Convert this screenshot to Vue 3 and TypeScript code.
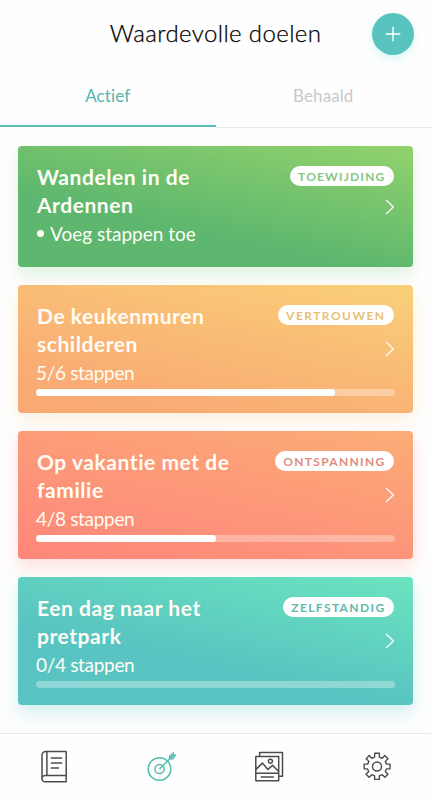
<script setup lang="ts">
interface Goal {
  lines: string[]
  label: string
  theme: string
  done?: number
  total?: number
}

const goals: Goal[] = [
  { lines: ['Wandelen in de', 'Ardennen'], label: 'TOEWIJDING', theme: 'green' },
  { lines: ['De keukenmuren', 'schilderen'], label: 'VERTROUWEN', theme: 'yellow', done: 5, total: 6 },
  { lines: ['Op vakantie met de', 'familie'], label: 'ONTSPANNING', theme: 'coral', done: 4, total: 8 },
  { lines: ['Een dag naar het', 'pretpark'], label: 'ZELFSTANDIG', theme: 'teal', done: 0, total: 4 },
]

const percent = (goal: Goal): string => `${((goal.done ?? 0) / (goal.total ?? 1)) * 100}%`
</script>

<template>
  <div class="app">
    <header class="header">
      <h1>Waardevolle doelen</h1>
      <button class="add" aria-label="Doel toevoegen">
        <svg width="16" height="16" viewBox="0 0 16 16"><path d="M8 .7v14.6M.7 8h14.6" /></svg>
      </button>
    </header>

    <nav class="tabs">
      <a class="tab active">Actief</a>
      <a class="tab">Behaald</a>
    </nav>

    <main class="goals">
      <article v-for="goal in goals" :key="goal.label" class="card" :class="goal.theme">
        <div class="info">
          <h2><span v-for="line in goal.lines" :key="line">{{ line }}</span></h2>
          <p v-if="goal.total" class="steps">{{ goal.done }}/{{ goal.total }} stappen</p>
          <p v-else class="steps empty"><i class="dot"></i>Voeg stappen toe</p>
        </div>
        <span class="badge">{{ goal.label }}</span>
        <svg class="chevron" width="10" height="16" viewBox="0 0 10 16"><path d="M1 .9 8.3 8 1 15.1" /></svg>
        <div v-if="goal.total" class="track">
          <div v-if="goal.done" class="fill" :style="{ width: percent(goal) }"></div>
        </div>
      </article>
    </main>

    <footer class="bar">
      <a class="item">
        <svg width="36" height="36" viewBox="0 0 36 36">
          <path d="M9.7 2.4H30.2V32.8H9.2a3 3 0 0 1-3.2-3.1V6.1a3.7 3.7 0 0 1 3.7-3.7ZM10.9 2.6v23.7M30.2 26.4H9.4A3.2 3.2 0 0 0 6 29.6M14.8 9h11.4M14.8 14h11.4M14.8 19h8.2" />
        </svg>
      </a>
      <a class="item current">
        <svg width="36" height="36" viewBox="1 0 36 36">
          <circle cx="16.5" cy="20" r="11.3" />
          <circle cx="16.5" cy="20" r="4.6" />
          <path d="M16.5 20 31.4 5.3M26.6 9.8V6M26.6 9.8h4M28.4 8V4.4M28.4 8h3.8M30.2 6.2V3.2M30.2 6.2h3" />
        </svg>
      </a>
      <a class="item">
        <svg width="36" height="36" viewBox="0 0 36 36">
          <path d="M8.6 7.6V3.6h22.9v23.7h-3.8M4.8 7.6h22.9v24.1H4.8ZM5 24.2h22.5M9.7 27.9h13.2M5 20.4l6.4-6.3 5.5 6.3 4.6-4 6 5.8" />
          <circle cx="19.4" cy="12.3" r="2" />
        </svg>
      </a>
      <a class="item">
        <svg width="34" height="34" viewBox="0 0 36 36">
          <path d="M15.5 4.5h5v4l3 1.3 2.9-2.8 3.2 3.2-2.8 2.9 1.3 2.9h3.7v5h-3.7l-1.3 2.9 2.8 2.9-3.2 3.2-2.9-2.8-3 1.3v3.7h-5v-3.7l-3-1.3-2.9 2.8-3.2-3.2 2.8-2.9-1.3-2.9H4.4v-5h3.7l1.3-2.9-2.8-2.9 3.2-3.2 2.7 2.8 3-1.3Z" />
          <circle cx="18" cy="18.5" r="4.8" />
        </svg>
      </a>
    </footer>
  </div>
</template>

<style>
body {
  margin: 0;
  background: #fff;
}
</style>

<style scoped>
.app {
  width: 431px;
  height: 800px;
  display: flex;
  flex-direction: column;
  overflow: hidden;
  background: #fefefe;
  font-family: Lato, 'Open Sans', sans-serif;
  font-variant-ligatures: none;
}

h1,
h2,
p {
  margin: 0;
}

svg {
  display: block;
  fill: none;
}

.header {
  height: 68px;
  box-sizing: border-box;
  padding: 0 17px;
  display: grid;
  grid-template-columns: 42px 1fr 42px;
  align-items: center;
}

h1 {
  grid-column: 2;
  padding-bottom: 2px;
  text-align: center;
  font-size: 24px;
  font-weight: 300;
  line-height: 32px;
  letter-spacing: 0.38px;
  -webkit-text-stroke: 0.25px #000;
  white-space: nowrap;
  color: #000;
}

.add {
  width: 42px;
  height: 42px;
  padding: 0;
  border: 0;
  border-radius: 50%;
  display: grid;
  place-items: center;
  background: #59c4bf;
  box-shadow: 0 4px 10px rgba(89, 220, 220, 0.22);
}

.add path {
  stroke: #fff;
  stroke-width: 1.4;
}

.tabs {
  height: 60px;
  display: grid;
  grid-template-columns: 1fr 1fr;
  box-sizing: border-box;
}

.tab {
  box-sizing: border-box;
  height: 60px;
  padding-top: 17px;
  border-bottom: 1px solid #e6e9e9;
  text-align: center;
  font-size: 17px;
  line-height: 21px;
  letter-spacing: 0.1px;
  color: #c9c9c9;
}

.tab.active {
  height: 59px;
  border-bottom: 2px solid #5bbcb7;
  color: #53b5ac;
}

.goals {
  flex: 1;
  padding: 18px 18px 0;
  display: flex;
  flex-direction: column;
  gap: 18px;
}

.card {
  height: 128px;
  box-sizing: border-box;
  padding: 17px 18px;
  border-radius: 4px;
  display: grid;
  grid-template-columns: 1fr auto;
  grid-template-rows: 26px 43px 17px 7px;
  justify-items: end;
  color: #fffdf5;
}

.card.green {
  height: 121px;
}

.info {
  grid-column: 1;
  grid-row: 1 / 4;
  justify-self: start;
  padding-left: 1px;
}

h2 {
  font-size: 21px;
  line-height: 27.5px;
  font-weight: 700;
  letter-spacing: 0.55px;
  white-space: nowrap;
}

h2 span {
  display: block;
}

.steps {
  margin-left: -1px;
  font-size: 19px;
  line-height: 31px;
  letter-spacing: -0.32px;
  white-space: nowrap;
}

.empty {
  margin-left: 0;
  display: flex;
  align-items: center;
  gap: 6px;
  letter-spacing: 0;
}

.dot {
  width: 7px;
  height: 7px;
  border-radius: 50%;
  background: currentColor;
}

.badge {
  grid-column: 2;
  grid-row: 1;
  height: 20px;
  margin: 3px 1px 0 0;
  padding: 0 8.5px;
  border-radius: 10px;
  display: block;
  background: #fff;
  font-size: 12px;
  font-weight: 700;
  line-height: 21px;
  letter-spacing: 1.3px;
}

.chevron {
  grid-column: 2;
  grid-row: 2;
  margin-top: 13px;
}

.green .chevron {
  margin-top: 10px;
}

.chevron path {
  stroke: #fff;
  stroke-width: 1.3;
}

.track {
  grid-column: 1 / 3;
  grid-row: 4;
  width: 100%;
  height: 7px;
  margin-top: 1px;
  border-radius: 4px;
  overflow: hidden;
  background: rgba(255, 255, 255, 0.32);
}

.fill {
  height: 7px;
  border-radius: 0 3px 3px 0;
  background: #fff;
}

.green {
  background: linear-gradient(12deg, #5db76e 0%, #5db76e 36%, #92d26c 100%);
  box-shadow: 0 8px 16px rgba(93, 195, 105, 0.2);
}

.yellow {
  background: linear-gradient(12deg, #f9a873 0%, #f9ad74 25%, #f9d078 100%);
  box-shadow: 0 8px 16px rgba(250, 190, 110, 0.22);
}

.coral {
  background: linear-gradient(12deg, #ff8679 0%, #fd927a 35%, #fcac76 100%);
  box-shadow: 0 8px 16px rgba(255, 130, 110, 0.24);
}

.teal {
  background: linear-gradient(12deg, #59c3c1 0%, #59c4c1 38%, #6be4bf 100%);
  box-shadow: 0 8px 16px rgba(80, 200, 195, 0.25);
}

.green .badge {
  letter-spacing: 1.2px;
  color: #83c784;
}

.yellow .badge {
  letter-spacing: 1.45px;
  color: #e9bf78;
}

.coral .badge {
  color: #df8c7e;
}

.teal .badge {
  letter-spacing: 1.38px;
  color: #5eb9aa;
}

.bar {
  height: 67px;
  box-sizing: border-box;
  padding-top: 15px;
  border-top: 1px solid #e4eaea;
  display: grid;
  grid-template-columns: repeat(4, 1fr);
  justify-items: center;
  background: #fefefe;
}

.item path,
.item circle {
  stroke: #4d4d4d;
  stroke-width: 1.5;
  stroke-linejoin: round;
}

.item.current path,
.item.current circle {
  stroke: #53bdb0;
}
</style>
